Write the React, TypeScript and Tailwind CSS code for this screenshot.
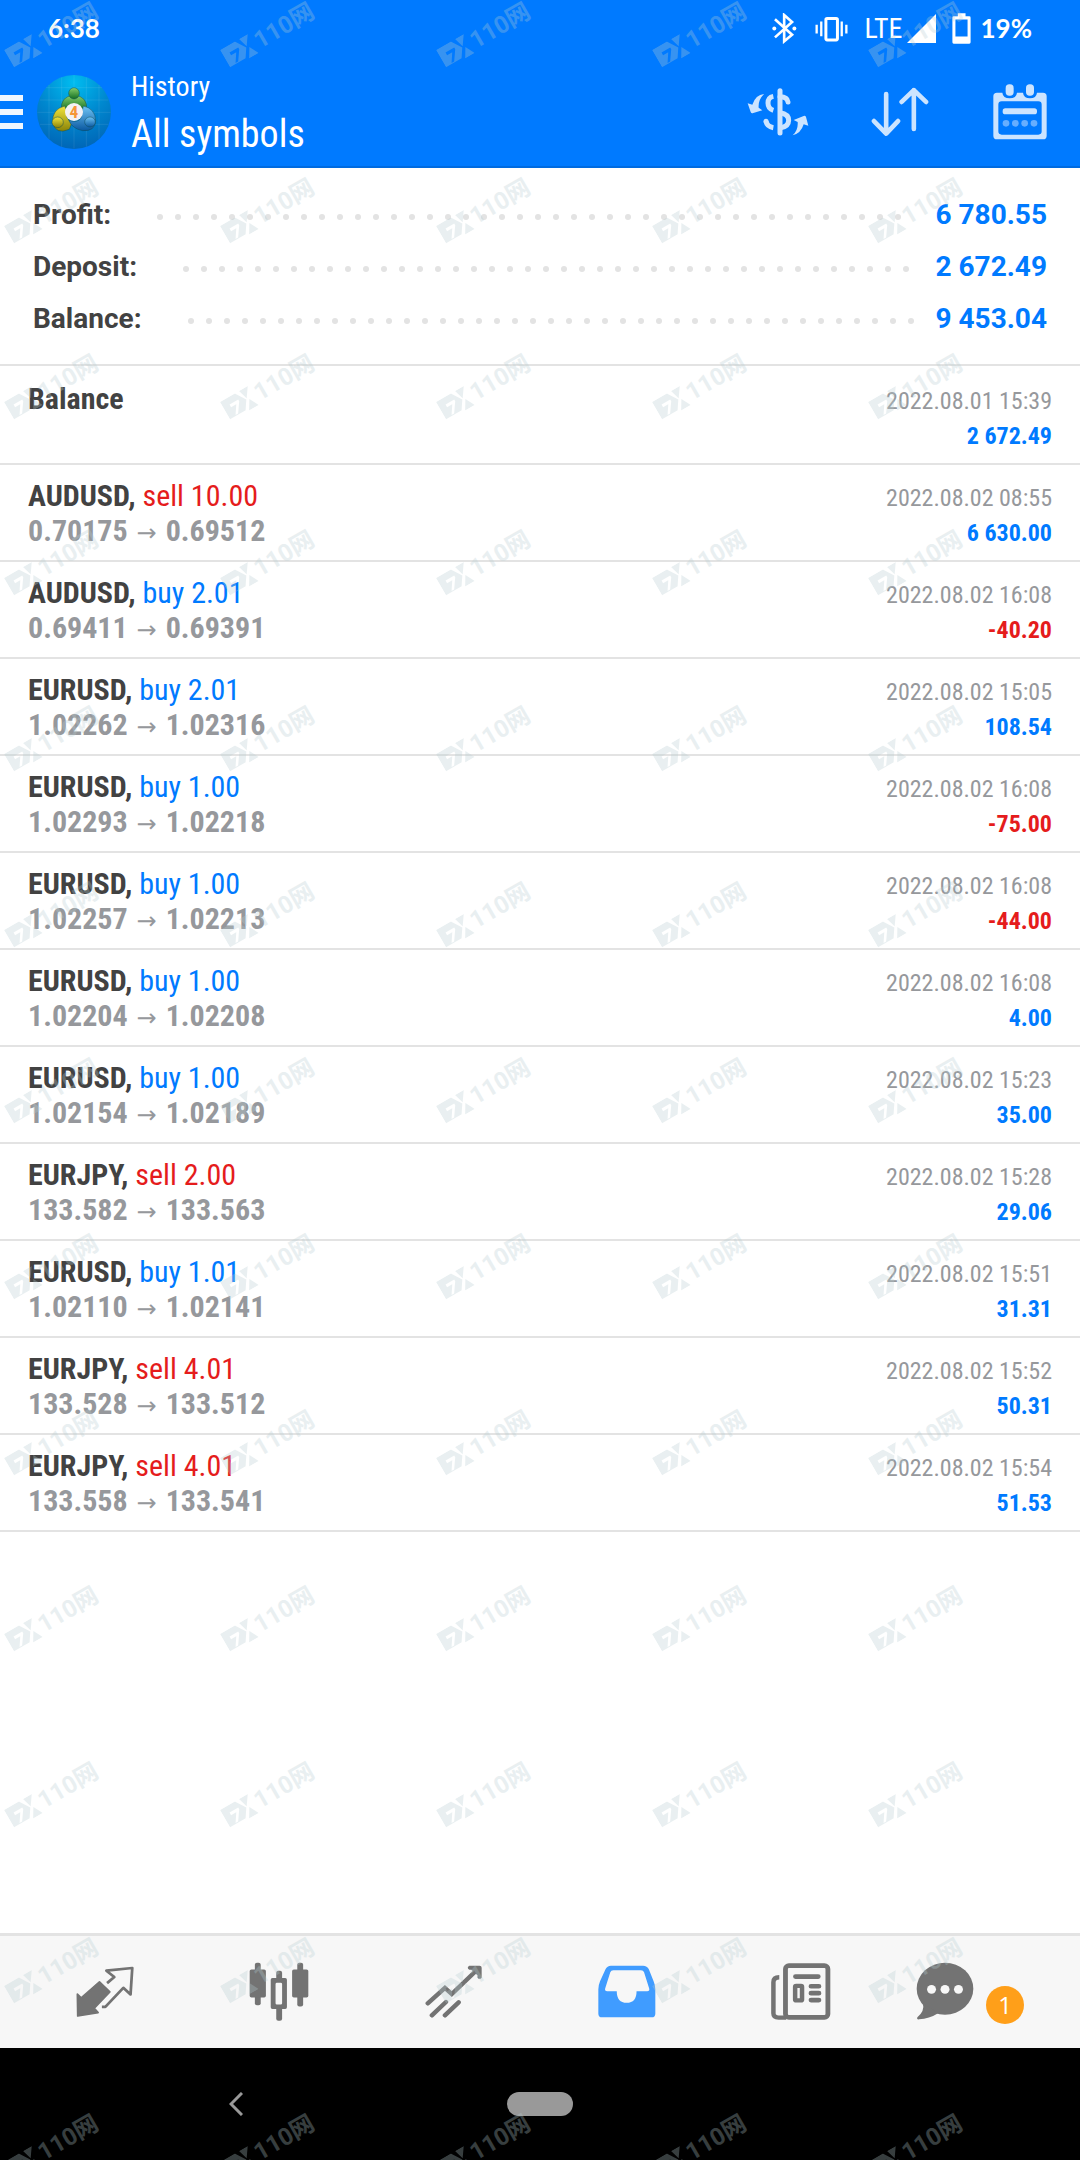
import React from "react";
import clsx from "clsx";

interface Deal {
  symbol: string;
  side?: "buy" | "sell";
  volume?: string;
  open?: string;
  close?: string;
  time: string;
  profit: string;
}

const summary = [
  { label: "Profit:", value: "6 780.55" },
  { label: "Deposit:", value: "2 672.49" },
  { label: "Balance:", value: "9 453.04" },
];

const deals: Deal[] = [
  { symbol: "Balance", time: "2022.08.01 15:39", profit: "2 672.49" },
  { symbol: "AUDUSD", side: "sell", volume: "10.00", open: "0.70175", close: "0.69512", time: "2022.08.02 08:55", profit: "6 630.00" },
  { symbol: "AUDUSD", side: "buy", volume: "2.01", open: "0.69411", close: "0.69391", time: "2022.08.02 16:08", profit: "-40.20" },
  { symbol: "EURUSD", side: "buy", volume: "2.01", open: "1.02262", close: "1.02316", time: "2022.08.02 15:05", profit: "108.54" },
  { symbol: "EURUSD", side: "buy", volume: "1.00", open: "1.02293", close: "1.02218", time: "2022.08.02 16:08", profit: "-75.00" },
  { symbol: "EURUSD", side: "buy", volume: "1.00", open: "1.02257", close: "1.02213", time: "2022.08.02 16:08", profit: "-44.00" },
  { symbol: "EURUSD", side: "buy", volume: "1.00", open: "1.02204", close: "1.02208", time: "2022.08.02 16:08", profit: "4.00" },
  { symbol: "EURUSD", side: "buy", volume: "1.00", open: "1.02154", close: "1.02189", time: "2022.08.02 15:23", profit: "35.00" },
  { symbol: "EURJPY", side: "sell", volume: "2.00", open: "133.582", close: "133.563", time: "2022.08.02 15:28", profit: "29.06" },
  { symbol: "EURUSD", side: "buy", volume: "1.01", open: "1.02110", close: "1.02141", time: "2022.08.02 15:51", profit: "31.31" },
  { symbol: "EURJPY", side: "sell", volume: "4.01", open: "133.528", close: "133.512", time: "2022.08.02 15:52", profit: "50.31" },
  { symbol: "EURJPY", side: "sell", volume: "4.01", open: "133.558", close: "133.541", time: "2022.08.02 15:54", profit: "51.53" },
];

function StatusBar() {
  return (
    <div className="flex h-[57px] items-center px-12 text-white">
      <span className="font-['Lato',sans-serif] text-[26px] font-bold">6:38</span>
      <svg className="ml-auto h-[31px] w-[25px]" viewBox="224 38 76 92" fill="none" stroke="currentColor" strokeWidth="8">
        <path d="M233 56 285 103 261 123V43L285 64 233 111" />
        <circle cx="231" cy="84" r="6" fill="currentColor" stroke="none" />
        <circle cx="292" cy="84" r="6" fill="currentColor" stroke="none" />
      </svg>
      <svg className="ml-[18px] h-[26px] w-[33px]" viewBox="352 44 100 78" fill="none" stroke="currentColor" strokeWidth="7">
        <rect x="385" y="51" width="35" height="65" rx="4" strokeWidth="9" />
        <path d="M371 60V105M357 70V97M433 60V105M447 70V97" />
      </svg>
      <span className="ml-4 font-['Roboto_Condensed',sans-serif] text-[28px]">LTE</span>
      <svg className="ml-1 h-[29px] w-[29px]" viewBox="0 0 29 29" fill="currentColor">
        <path d="M29 0V29H0Z" />
      </svg>
      <svg className="ml-4 h-[31px] w-[19px]" viewBox="764 38 56 92" fill="currentColor" fillRule="evenodd">
        <path d="M781 39H804V48H815Q819 48 819 52V125Q819 129 815 129H769Q765 129 765 125V52Q765 48 769 48H781ZM774 57V108H810V57Z" />
      </svg>
      <span className="ml-[10px] font-['Lato',sans-serif] text-[26px] font-bold">19%</span>
    </div>
  );
}

function AccountLogo() {
  return (
    <svg className="h-[74px] w-[74px]" viewBox="21 15 222 222" role="img" aria-label="Account">
      <defs>
        <radialGradient id="sky" cx="0.5" cy="0.1" r="0.95">
          <stop offset="0" stopColor="#00bdf0" />
          <stop offset="0.5" stopColor="#0088cf" />
          <stop offset="1" stopColor="#0062b4" />
        </radialGradient>
        <linearGradient id="green" x1="0" y1="0" x2="0" y2="1">
          <stop offset="0" stopColor="#86cf6c" />
          <stop offset="1" stopColor="#126e22" />
        </linearGradient>
        <linearGradient id="yellow" x1="0" y1="0" x2="0" y2="1">
          <stop offset="0" stopColor="#f2e43c" />
          <stop offset="1" stopColor="#8a8308" />
        </linearGradient>
        <linearGradient id="blue" x1="0" y1="0" x2="0" y2="1">
          <stop offset="0" stopColor="#6fc4f5" />
          <stop offset="1" stopColor="#0a58a0" />
        </linearGradient>
      </defs>
      <circle cx="132" cy="126" r="111" fill="url(#sky)" />
      <path d="M57 45V207M95 22V230M132 16V236M169 22V230M207 45V207M30 90H235M22 127H242M30 163H235M48 53H216" stroke="#fff" strokeOpacity="0.13" strokeWidth="2" />
      <g stroke="#0b4a55" strokeOpacity="0.7" strokeWidth="2">
        <path d="M94 122Q90 78 132 76Q174 78 170 122L150 112Q132 96 114 112Z" fill="url(#green)" />
        <path d="M118 178Q76 196 68 156Q66 118 104 108L112 128Q104 142 126 158Z" fill="url(#yellow)" />
        <path d="M116 150Q140 160 152 146L160 108Q196 116 197 152Q196 184 158 182Q126 176 116 150Z" fill="url(#blue)" />
        <ellipse cx="132" cy="70" rx="16" ry="17" fill="url(#green)" />
        <ellipse cx="83" cy="157" rx="17" ry="16" fill="url(#yellow)" />
        <ellipse cx="180" cy="156" rx="16" ry="15" fill="url(#blue)" />
      </g>
      <circle cx="132" cy="126" r="27" fill="#f3f1f4" />
      <text x="132" y="144" textAnchor="middle" fontFamily="Roboto Condensed, sans-serif" fontSize="52" fontWeight="700" fill="#f59638">4</text>
    </svg>
  );
}

function Toolbar() {
  return (
    <div className="flex h-[109px] items-center pr-[33px] text-[#cce4ff]">
      <button aria-label="Menu" className="flex w-[23px] flex-col gap-2">
        <span className="h-[6px] bg-[#eef6ff]" />
        <span className="h-[6px] bg-[#eef6ff]" />
        <span className="h-[6px] bg-[#eef6ff]" />
      </button>
      <div className="ml-[14px]">
        <AccountLogo />
      </div>
      <div className="ml-5 font-['Roboto_Condensed',sans-serif] text-white">
        <p className="text-[28px] leading-[44px]">History</p>
        <h1 className="text-[38px] leading-[50px]">All symbols</h1>
      </div>
      <button aria-label="Filter by symbol" className="ml-auto">
        <svg className="h-[48px] w-[62px]" viewBox="20 24 186 144" fill="none" stroke="currentColor" strokeWidth="15">
          <path d="M119 32V159" strokeLinecap="round" />
          <path d="M99 49Q83 52 83 69Q83 86 99 91" />
          <path d="M99 143Q80 140 77 124" />
          <circle cx="77" cy="124" r="7.5" fill="currentColor" stroke="none" />
          <path d="M119 50Q141 50 143 66" strokeLinecap="round" />
          <path d="M119 98Q145 102 145 121Q145 141 119 144" />
          <path d="M71 42Q46 44 36 74L22 70 31 96Q33 101 39 99L66 91 55 83Q53 60 71 42ZM157 166Q182 160 190 133L204 137 197 111Q195 106 190 108L160 120 172 126Q174 150 157 166Z" fill="currentColor" stroke="none" />
        </svg>
      </button>
      <button aria-label="Sort" className="ml-[62px]">
        <svg className="h-[51px] w-[58px]" viewBox="508 256 176 154" fill="none" stroke="currentColor" strokeWidth="14" strokeLinecap="round" strokeLinejoin="round">
          <path d="M554 280V400M517 362 554 400 590 362M638 386V268M601 304 638 268 675 304" />
        </svg>
      </button>
      <button aria-label="Period" className="ml-16">
        <svg className="h-[56px] w-[54px]" viewBox="878 248 162 168" fill="currentColor" fillRule="evenodd">
          <path d="M890 274H906Q908 291 928 291Q948 291 950 274H968Q970 291 989 291Q1008 291 1010 274H1028Q1039 274 1039 285V403Q1039 414 1028 414H890Q879 414 879 403V285Q879 274 890 274ZM904 300Q894 300 894 310V390Q894 400 904 400H1014Q1024 400 1024 390V310Q1024 300 1014 300Z" />
          <rect x="916" y="249" width="24" height="34" rx="11" />
          <rect x="977" y="249" width="24" height="34" rx="11" />
          <rect x="907" y="321" width="103" height="18" rx="8" />
          <g fill="#66aeff">
            <circle cx="917" cy="366" r="10" />
            <circle cx="945" cy="366" r="10" />
            <circle cx="973" cy="366" r="10" />
            <circle cx="1001" cy="366" r="10" />
          </g>
        </svg>
      </button>
    </div>
  );
}

function SummaryRow({ label, value }: { label: string; value: string }) {
  return (
    <div className="flex h-[52px] items-center text-[28px] font-bold">
      <dt className="text-[#424242]">{label}</dt>
      {/* dots that do not fit wrap onto a hidden line */}
      <div aria-hidden="true" className="mt-1 mr-5 ml-[46px] flex h-[6px] flex-1 flex-wrap gap-3 overflow-hidden">
        {Array.from({ length: 60 }, (_, i) => (
          <span key={i} className="size-[6px] rounded-full bg-[#e3e3e3]" />
        ))}
      </div>
      <dd className="text-[#007aff]">{value}</dd>
    </div>
  );
}

function DealRow({ deal }: { deal: Deal }) {
  return (
    <li className="border-b-2 border-[#e3e3e3] px-7 pt-[13px] pb-3 font-['Roboto_Condensed',sans-serif] first:pt-[15px]">
      <div className="flex h-[35px] items-baseline justify-between">
        <p className="text-[30px] leading-[35px] text-[#424242]">
          <span className="font-bold">{deal.side ? `${deal.symbol},` : deal.symbol}</span>
          {deal.side && (
            <span className={deal.side === "buy" ? "text-[#007aff]" : "text-[#e51c1c]"}>
              {" "}
              {deal.side} {deal.volume}
            </span>
          )}
        </p>
        <time className="text-[24px] leading-7 text-[#96989c]">{deal.time}</time>
      </div>
      <div className="flex h-[35px] items-baseline justify-between">
        <p className="text-[30px] leading-[35px] font-bold text-[#96989c]">
          {deal.open ? (
            <>
              {deal.open}{" "}
              <span className="mx-[2px] font-['DejaVu_Sans',sans-serif] text-[24px] leading-none font-normal">→</span>{" "}
              {deal.close}
            </>
          ) : (
            "\u00a0"
          )}
        </p>
        <p
          className={clsx(
            "text-[24px] leading-7 font-bold",
            deal.profit.startsWith("-") ? "text-[#e51c1c]" : "text-[#007aff]"
          )}
        >
          {deal.profit}
        </p>
      </div>
    </li>
  );
}

function TabButton({ label, children }: { label: string; children: React.ReactNode }) {
  return (
    <button aria-label={label} className="flex flex-1 items-center justify-center">
      {children}
    </button>
  );
}

function TabBar() {
  return (
    <nav className="flex h-[115px] border-t-[3px] border-[#e3e3e3] bg-[#f7f7f7] px-[18px] pb-[2px] text-[#737373]">
      <TabButton label="Quotes">
        <svg className="h-[51px] w-[58px]" viewBox="221 136 168 152" preserveAspectRatio="none" strokeLinejoin="round">
          <path d="M225 220 236 231 289 183 319 213 274 262 285 275 226 285Z" fill="currentColor" stroke="currentColor" strokeWidth="5" />
          <path d="M311 187 332 169 309 150 384 142 379 221 358 201 306 258H296" fill="none" stroke="currentColor" strokeWidth="8" />
        </svg>
      </TabButton>
      <TabButton label="Charts">
        <svg className="h-[59px] w-[60px]" viewBox="722 122 174 176" preserveAspectRatio="none" fill="currentColor" fillRule="evenodd">
          <rect x="739" y="124" width="17" height="127" rx="6" />
          <rect x="724" y="144" width="47" height="84" rx="5" />
          <rect x="862" y="124" width="17" height="131" rx="6" />
          <rect x="847" y="144" width="47" height="84" rx="5" />
          <rect x="801" y="148" width="17" height="28" rx="6" />
          <rect x="801" y="256" width="17" height="41" rx="6" />
          <path d="M790 170H827Q832 170 832 175V257Q832 262 827 262H790Q785 262 785 257V175Q785 170 790 170ZM803 184Q799 184 799 188V245Q799 249 803 249H814Q818 249 818 245V188Q818 184 814 184Z" />
        </svg>
      </TabButton>
      <TabButton label="Trade">
        <svg className="h-[53px] w-[57px]" viewBox="1232 129 166 159" preserveAspectRatio="none" fill="none" stroke="currentColor" strokeWidth="13" strokeLinecap="round">
          <path d="M1240 244 1290 198 1310 216 1380 147M1252 280 1293 240M1290 280 1330 241" />
          <path d="M1361 131H1391Q1397 131 1397 137V167Q1391 174 1385 167V160L1367 143H1361Q1352 137 1361 131Z" fill="currentColor" stroke="none" />
        </svg>
      </TabButton>
      <TabButton label="History">
        <svg className="h-[53px] w-[58px]" viewBox="168 129 170 160" preserveAspectRatio="none" fill="#409cff" fillRule="evenodd">
          <path d="M206 131H300Q312 131 317 142L331 178Q336 190 336 202V276Q336 287 325 287H180Q169 287 169 276V202Q169 190 174 178L190 142Q195 131 206 131ZM213 145Q206 145 204 151L189 200Q187 208 195 208H223Q223 243 252 243Q281 243 281 208H312Q320 208 318 200L303 151Q301 145 294 145Z" />
        </svg>
      </TabButton>
      <TabButton label="News">
        <svg className="h-[57px] w-[60px]" viewBox="674 122 174 172" preserveAspectRatio="none" fill="none" stroke="currentColor">
          <rect x="716" y="130" width="123" height="156" rx="10" strokeWidth="14" />
          <path d="M698 165Q681 165 681 180V274Q681 287 696 287H718" strokeWidth="13" />
          <path d="M745 163H811M790 192H813M790 213H813M790 234H813" strokeWidth="14" strokeLinecap="round" />
          <rect x="744" y="191" width="20" height="44" rx="3" strokeWidth="13" />
        </svg>
      </TabButton>
      <TabButton label="Messages, 1 unread">
        <svg className="h-[58px] w-[58px]" viewBox="1094 121 168 174" preserveAspectRatio="none" fill="currentColor">
          <ellipse cx="1178" cy="201" rx="82" ry="78" />
          <path d="M1114 245Q1120 268 1098 287Q1095 294 1103 293Q1132 292 1158 275Z" />
          <g fill="#f7f7f7">
            <circle cx="1139" cy="203" r="13" />
            <circle cx="1178" cy="203" r="13" />
            <circle cx="1217" cy="203" r="13" />
          </g>
        </svg>
        <span className="mt-7 mr-[10px] ml-3 flex size-[38px] items-center justify-center rounded-full bg-[#ff9f19] font-['Open_Sans',sans-serif] text-2xl text-white">
          1
        </span>
      </TabButton>
    </nav>
  );
}

function SystemBar() {
  return (
    <div className="grid h-[112px] grid-cols-3 items-center bg-black px-[84px]">
      <button aria-label="Back" className="justify-self-center">
        <svg className="h-6 w-[14px]" viewBox="0 0 14 24" fill="none" stroke="#999" strokeWidth="3">
          <path d="M13 1 2 12 13 23" />
        </svg>
      </button>
      <button aria-label="Home" className="h-6 w-[66px] justify-self-center rounded-full bg-[#999]" />
    </div>
  );
}

function Watermarks() {
  return (
    <div
      aria-hidden="true"
      className="pointer-events-none absolute inset-0 grid auto-rows-[176px] grid-cols-[repeat(auto-fill,216px)] overflow-hidden text-[#b7cdd2] opacity-30"
    >
      {Array.from({ length: 65 }, (_, i) => (
        <div key={i} className="pt-[50px] pl-1">
          <div className="flex h-[22px] w-[104px] origin-top-left -rotate-30 items-center font-['Roboto','Noto_Sans_CJK_SC',sans-serif] text-[24px] leading-none font-bold">
            <svg className="h-[22px] w-8 shrink-0" viewBox="0 0 32 22" fill="currentColor" fillRule="evenodd">
              <path d="M0 0H17L24 11 18 20H0ZM7 7V10H13L7 19H10L17 9V7ZM22 0H32L25 10ZM27 12 32 22H21Z" />
            </svg>
            <span className="ml-[3px]">110网</span>
          </div>
        </div>
      ))}
    </div>
  );
}

export default function App() {
  return (
    <div className="relative flex min-h-screen flex-col overflow-hidden bg-white font-['Roboto',sans-serif]">
      <header className="border-b-2 border-[#006be0] bg-[#007aff]">
        <StatusBar />
        <Toolbar />
      </header>
      <main className="flex-1">
        <dl className="border-b-2 border-[#e3e3e3] px-[33px] pt-[21px] pb-[19px]">
          {summary.map((row) => (
            <SummaryRow key={row.label} label={row.label} value={row.value} />
          ))}
        </dl>
        <ul>
          {deals.map((deal, i) => (
            <DealRow key={i} deal={deal} />
          ))}
        </ul>
      </main>
      <TabBar />
      <SystemBar />
      <Watermarks />
    </div>
  );
}
